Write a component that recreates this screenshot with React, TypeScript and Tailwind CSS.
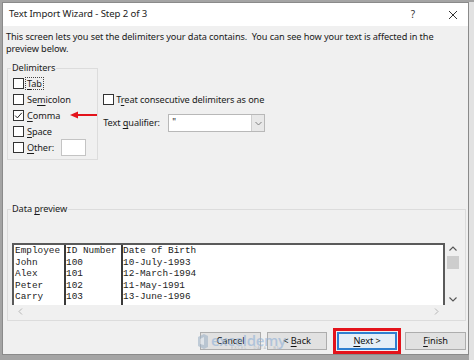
import React from "react";

const rows = [
  ["Employee", "ID Number", "Date of Birth"],
  ["John", "100", "10-July-1993"],
  ["Alex", "101", "12-March-1994"],
  ["Peter", "102", "11-May-1991"],
  ["Carry", "103", "13-June-1996"],
];

const delimiters = [
  { pre: "", key: "T", post: "ab", focus: true },
  { pre: "Se", key: "m", post: "icolon" },
  { pre: "", key: "C", post: "omma", checked: true },
  { pre: "", key: "S", post: "pace" },
  { pre: "", key: "O", post: "ther:" },
];

function CheckBox({ checked = false }: { checked?: boolean }) {
  return (
    <span className="flex h-[11px] w-[11px] shrink-0 items-center justify-center border border-[#333] bg-white">
      {checked && (
        <svg width="9" height="9" viewBox="0 0 9 9">
          <path d="M1.2 4.6 3.4 6.9 7.8 1.8" fill="none" stroke="#222" strokeWidth="1" />
        </svg>
      )}
    </span>
  );
}

function Key({ children }: { children: React.ReactNode }) {
  return <span className="underline decoration-[0.8px] underline-offset-[1.5px]">{children}</span>;
}

function Button({ children, className = "" }: { children: React.ReactNode; className?: string }) {
  return (
    <div
      className={`flex h-[18px] items-center justify-center border border-[#adadad] bg-[#e1e1e1] text-[#111] ${className}`}
    >
      <span className="whitespace-pre">{children}</span>
    </div>
  );
}

export default function App() {
  return (
    <div className="flex h-[360px] w-[474px] overflow-hidden bg-[#a4a4a4] pl-[2px] pt-[2px] font-['Noto_Sans',sans-serif] text-[9.2px] tracking-[-0.1px] text-[#1a1a1a]">
      {/* dialog */}
      <div className="flex h-[353px] w-[467px] shrink-0 flex-col border border-[#8a8a8a] bg-[#f0f0f0]">
        {/* title bar */}
        <div className="flex h-[23px] shrink-0 items-center bg-white pl-[6px] pr-[10px] text-[9.6px] text-[#222]">
          <span>Text Import Wizard - Step 2 of 3</span>
          <span className="ml-auto mr-[33px] text-[10px] text-[#333]">?</span>
          <svg width="10" height="10" viewBox="0 0 10 10">
            <path d="M1 1 9 9M9 1 1 9" stroke="#333" strokeWidth="1" />
          </svg>
        </div>

        {/* description */}
        <p className="mt-[5px] whitespace-nowrap pl-[3px] leading-[12px]">
          This screen lets you set the delimiters your data contains.&nbsp; You can see how your text is affected in the
          <br />
          preview below.
        </p>

        {/* delimiters + options */}
        <div className="mt-[7px] flex items-start">
          <fieldset className="ml-[4px] h-[98px] w-[89px] border border-[#dcdcdc] pl-[3px]">
            <legend className="px-[1px] leading-[12px]">Delimiters</legend>
            <div className="ml-[2px] mt-[1px] flex flex-col">
              {delimiters.map((d) => (
                <div key={d.key} className="flex h-[16px] items-center gap-[1px]">
                  <CheckBox checked={d.checked} />
                  <span
                    className={`border px-[1px] leading-[11px] ${
                      d.focus ? "border-dotted border-[#444]" : "border-transparent"
                    }`}
                  >
                    {d.pre}
                    <Key>{d.key}</Key>
                    {d.post}
                  </span>
                  {d.checked && (
                    <svg className="ml-[7px]" width="27" height="8" viewBox="0 0 27 8">
                      <path d="M0 4 8 0.5V7.5Z" fill="#e3131b" />
                      <path d="M6 4H27" stroke="#e3131b" strokeWidth="2" />
                    </svg>
                  )}
                  {d.key === "O" && <span className="ml-[4px] h-[17px] w-[25px] border border-[#c4c4c4] bg-white" />}
                </div>
              ))}
            </div>
          </fieldset>

          <div className="ml-[5px] mt-[29px] flex flex-col">
            <div className="flex h-[17px] items-center gap-[2px]">
              <CheckBox />
              <span>
                T<Key>r</Key>eat consecutive delimiters as one
              </span>
            </div>
            <div className="mt-[6px] flex h-[18px] items-center">
              <span className="w-[65px] shrink-0">
                Text <Key>q</Key>ualifier:
              </span>
              <div className="flex h-[18px] w-[97px] items-stretch border border-[#b8b8b8] bg-white">
                <span className="flex-1 pl-[3px] leading-[14px]">&quot;</span>
                <span className="flex w-[13px] items-center justify-center border-l border-[#cfcfcf] bg-[#e8e8e8]">
                  <svg width="7" height="5" viewBox="0 0 7 5">
                    <path d="M0.5 1 3.5 4 6.5 1" fill="none" stroke="#777" strokeWidth="0.9" />
                  </svg>
                </span>
              </div>
            </div>
          </div>
        </div>

        {/* data preview */}
        <fieldset className="ml-[4px] mt-[43px] h-[119px] w-[459px] border border-[#dcdcdc] pl-[3px]">
          <legend className="px-[1px] leading-[12px]">
            Data <Key>p</Key>review
          </legend>
          <div className="ml-[1px] mt-[28px] flex">
            <div className="flex w-[433px] flex-col">
              <div className="flex h-[62px] border-l-2 border-r-2 border-t-2 border-[#5a5a5a] bg-white font-['Liberation_Mono',monospace] text-[9.4px] leading-[11.5px] tracking-normal text-[#222]">
                <div className="w-[50px] pl-[1px]">
                  {rows.map((r) => (
                    <div key={r[0]}>{r[0]}</div>
                  ))}
                </div>
                <div className="w-[57px] border-l-2 border-[#3a3a3a]">
                  {rows.map((r) => (
                    <div key={r[1]}>{r[1]}</div>
                  ))}
                </div>
                <div className="flex-1 border-l-2 border-[#3a3a3a]">
                  {rows.map((r) => (
                    <div key={r[2]}>{r[2]}</div>
                  ))}
                </div>
              </div>
              <div className="flex h-[13px] items-center justify-between px-[6px]">
                <svg width="5" height="7" viewBox="0 0 5 7">
                  <path d="M4 0.5 1 3.5 4 6.5" fill="none" stroke="#b5b5b5" strokeWidth="1" />
                </svg>
                <svg width="5" height="7" viewBox="0 0 5 7">
                  <path d="M1 0.5 4 3.5 1 6.5" fill="none" stroke="#b5b5b5" strokeWidth="1" />
                </svg>
              </div>
            </div>
            <div className="flex h-[62px] w-[15px] flex-col items-center">
              <svg className="mt-[3px]" width="8" height="5" viewBox="0 0 8 5">
                <path d="M0.5 4.5 4 1 7.5 4.5" fill="none" stroke="#555" strokeWidth="1.1" />
              </svg>
              <div className="mt-[5px] h-[13px] w-[12px] bg-[#cdcdcd]" />
              <svg className="mb-[3px] mt-auto" width="8" height="5" viewBox="0 0 8 5">
                <path d="M0.5 0.5 4 4 7.5 0.5" fill="none" stroke="#555" strokeWidth="1.1" />
              </svg>
            </div>
          </div>
        </fieldset>

        {/* buttons */}
        <div className="relative mt-[7px] flex items-center justify-end pr-[2px]">
          <Button className="w-[61px]">Cancel</Button>
          <Button className="ml-[6px] w-[60px]">
            {"< "}
            <Key>B</Key>ack
          </Button>
          <div className="ml-[6px] border-[3px] border-[#e3131b] p-[1px]">
            <div className="flex h-[18px] w-[60px] items-center justify-center border-2 border-[#2f7fd0] bg-[#e5eef7] text-[#111]">
              <span>
                <Key>N</Key>ext &gt;
              </span>
            </div>
          </div>
          <Button className="ml-[4px] w-[61px]">
            <Key>F</Key>inish
          </Button>

          {/* watermark */}
          <div className="pointer-events-none absolute left-[194px] top-[5px] flex items-center opacity-60">
            <svg width="12" height="15" viewBox="0 0 12 15">
              <path d="M1 3 7 0 11 2V13L7 15 1 12Z" fill="#9fb3c8" />
              <path d="M3 5 7 3V11L3 10Z" fill="#dfe7ef" />
            </svg>
            <div className="ml-[2px] flex flex-col leading-none">
              <span className="font-['Open_Sans',sans-serif] text-[15px] font-semibold tracking-[-0.3px] text-[#8fb0d6]">
                exceldemy
              </span>
              <span className="ml-[20px] mt-[-2px] text-[4px] tracking-[1px] text-[#9aa9b8]">EXCEL · DATA · BI</span>
            </div>
          </div>
        </div>
      </div>
      <div className="h-full flex-1 bg-[#e2e2e2]" />
    </div>
  );
}
